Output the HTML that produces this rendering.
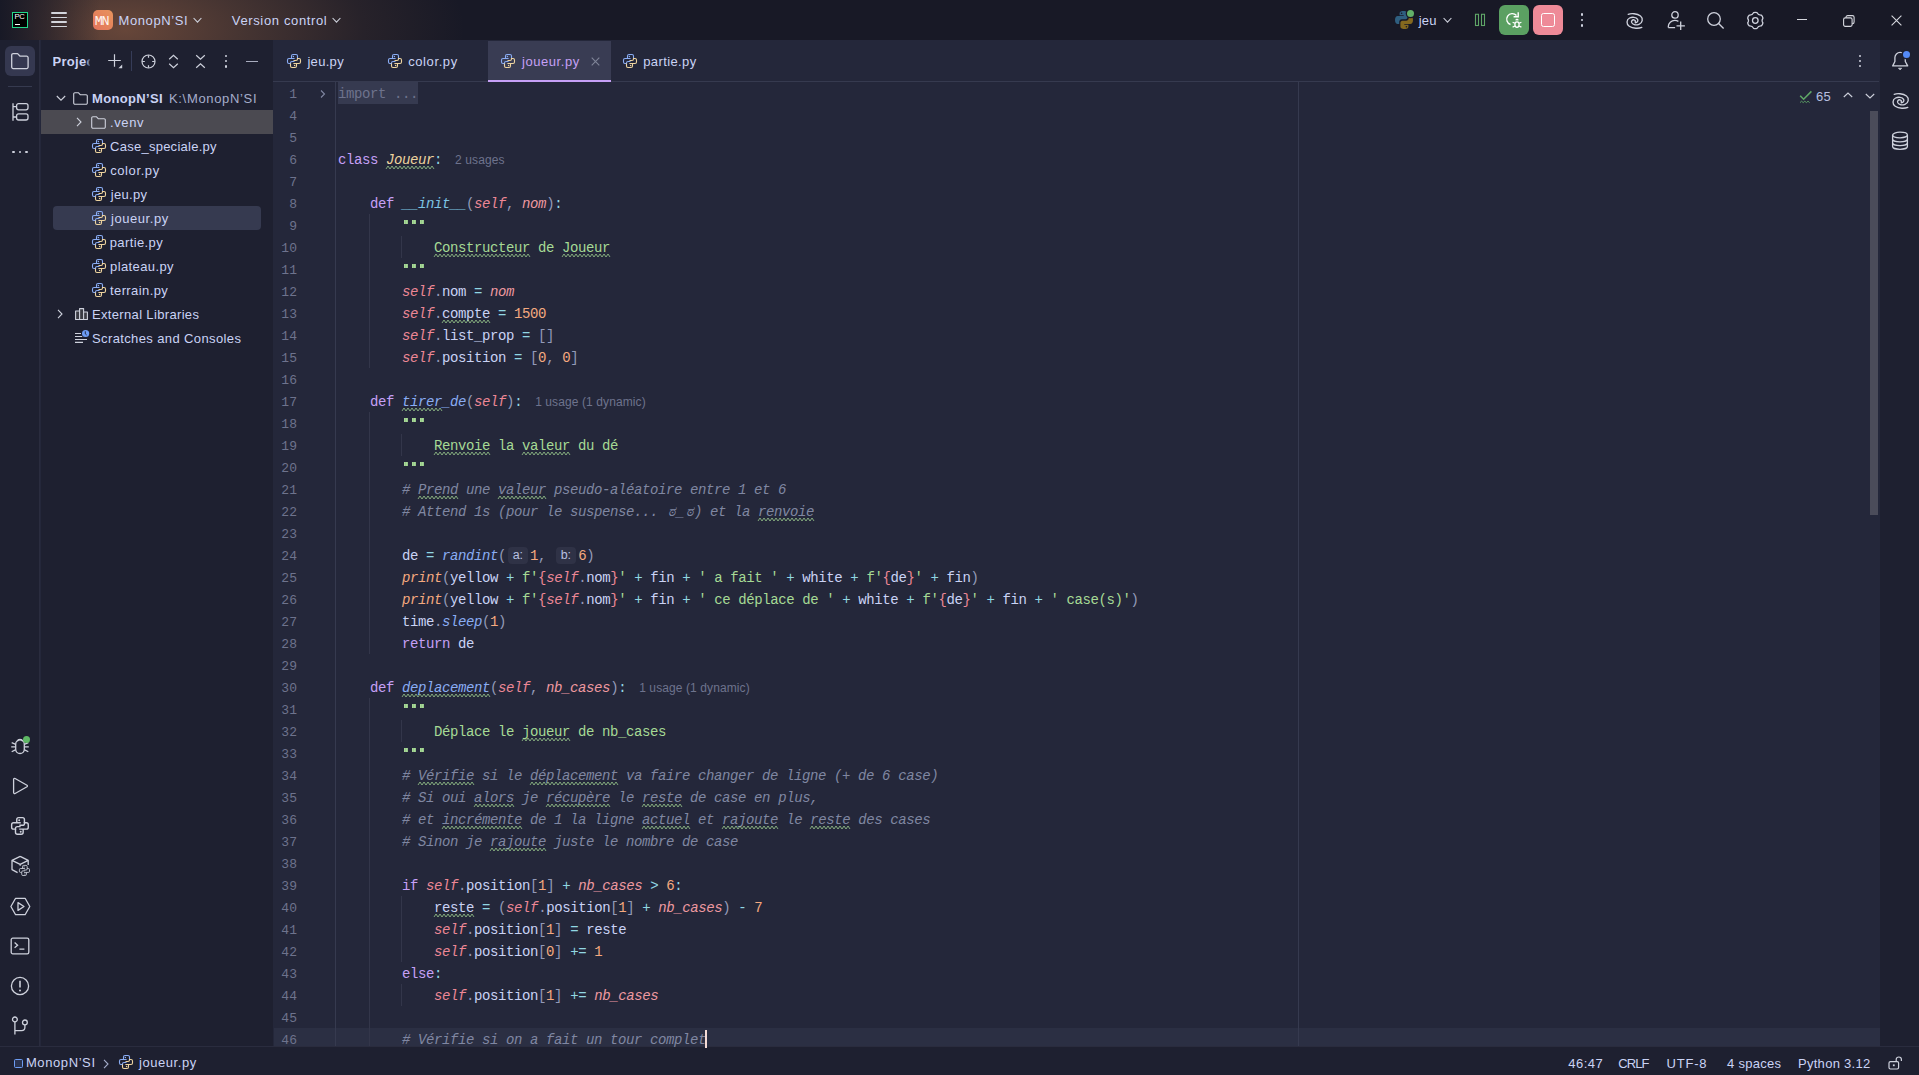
<!DOCTYPE html><html><head><meta charset="utf-8"><style>
*{margin:0;padding:0;box-sizing:border-box}
html,body{width:1919px;height:1075px;overflow:hidden;background:#24273a}
body{position:relative;font-family:"Liberation Sans",sans-serif;font-size:13px;color:#cad3f5}
.abs{position:absolute}
.ic{position:absolute;overflow:visible}
.ui{position:absolute;white-space:pre;font-family:"Liberation Sans",sans-serif;font-size:13px;letter-spacing:0.3px;line-height:16px;color:#cad3f5}
#title{left:0;top:0;width:1919px;height:40px;background:#181926}
#glow{left:0;top:0;width:700px;height:40px;background:linear-gradient(90deg,#181926 0px,rgba(24,25,38,0.6) 40px,rgba(24,25,38,0) 100px),radial-gradient(ellipse 340px 150px at 125px 30px, rgba(155,100,70,0.6) 0%, rgba(150,100,70,0.36) 35%, rgba(150,100,70,0.12) 70%, rgba(150,100,70,0) 100%)}
#lstrip{left:0;top:40px;width:40px;height:1006px;background:#1e2030;border-right:1px solid #2a2c3e}
#proj{left:41px;top:40px;width:232px;height:1006px;background:#1e2030}
#rstrip{left:1880px;top:40px;width:39px;height:1006px;background:#1e2030}
#status{left:0;top:1046px;width:1919px;height:29px;background:#1e2030;border-top:1px solid #2a2c3e}
#editor{left:273px;top:40px;width:1606px;height:1006px;background:#24273a}
#tabline{left:273px;top:81px;width:1606px;height:1px;background:#363a4f}
.code{position:absolute;left:338px;height:22px;white-space:pre;font-family:"Liberation Mono",monospace;font-size:14px;letter-spacing:-0.4px;line-height:22px;color:#cad3f5}
.code span{position:relative;top:1px}
.ln{position:absolute;left:273px;width:24.2px;text-align:right;height:22px;white-space:pre;font-family:"Liberation Mono",monospace;font-size:13px;letter-spacing:0.2px;line-height:22px;color:#6e738d}
.ln span{position:relative;top:2px}
.k{color:#c6a0f6}
.c{color:#eed49f;font-style:italic}
.f{color:#8aadf4;font-style:italic}
.m{color:#7dc4e4;font-style:italic}
.s{color:#ed8796;font-style:italic}
.p{color:#ee99a0;font-style:italic}
.o{color:#91d7e3}
.b{color:#939ab7}
.n{color:#f5a97f}
.g{color:#a6da95}
.cm{color:#8087a2;font-style:italic}
.bi{color:#f5a97f;font-style:italic}
.t{color:#cad3f5}
.fb{color:#ed8796}
.typo{}
.hint{font-family:"Liberation Sans",sans-serif;font-size:12px;letter-spacing:0.1px;color:#6e738d}
.ihint{display:inline-block;width:24px;text-align:left;letter-spacing:0}
.ihint i{font-style:normal;display:inline-block;margin-left:2px;width:19.5px;text-align:center;height:17px;line-height:17px;background:#2f3246;border-radius:4px;font-family:"Liberation Sans",sans-serif;font-size:12.5px;letter-spacing:0;color:#b8c0e0;vertical-align:top;margin-top:2px;top:0 !important}
.dq{display:inline-block;width:8px;height:22px;vertical-align:top;top:0 !important;background:linear-gradient(#a6da95,#a6da95) 2px 6px/1.9px 4.2px no-repeat,linear-gradient(#a6da95,#a6da95) 4.4px 6px/1.9px 4.2px no-repeat}
.guide{position:absolute;width:1px;background:#363a4f}
</style></head><body>
<svg width="0" height="0" style="position:absolute"><defs>
<g id="py" fill="none" stroke-width="1.1">
<path stroke="#8aadf4" d="M7.6 4.5H2A1.5 1.5 0 0 0 0.5 6V8A1.5 1.5 0 0 0 2 9.5H3.5V9A1.5 1.5 0 0 1 5 7.5H7.5M4.5 4.5V2A1.5 1.5 0 0 1 6 0.5H9A1.5 1.5 0 0 1 10.5 2V4.6"/>
<path stroke="#eed49f" d="M6.4 9.5H12A1.5 1.5 0 0 0 13.5 8V6A1.5 1.5 0 0 0 12 4.5H10.5V5A1.5 1.5 0 0 1 9 6.5H6.5M9.5 9.5V12A1.5 1.5 0 0 1 8 13.5H5A1.5 1.5 0 0 1 3.5 12V9.4"/>
<circle cx="6.4" cy="2.5" r="0.75" fill="#8aadf4" stroke="none"/>
<circle cx="7.6" cy="11.5" r="0.75" fill="#eed49f" stroke="none"/>
</g>
<g id="pyo" fill="none" stroke="#ced1dc" stroke-width="1.1">
<path d="M7.6 4.5H2A1.5 1.5 0 0 0 0.5 6V8A1.5 1.5 0 0 0 2 9.5H3.5V9A1.5 1.5 0 0 1 5 7.5H7.5M4.5 4.5V2A1.5 1.5 0 0 1 6 0.5H9A1.5 1.5 0 0 1 10.5 2V4.6"/>
<path d="M6.4 9.5H12A1.5 1.5 0 0 0 13.5 8V6A1.5 1.5 0 0 0 12 4.5H10.5V5A1.5 1.5 0 0 1 9 6.5H6.5M9.5 9.5V12A1.5 1.5 0 0 1 8 13.5H5A1.5 1.5 0 0 1 3.5 12V9.4"/>
<circle cx="6.4" cy="2.5" r="0.75" fill="#ced1dc" stroke="none"/><circle cx="7.6" cy="11.5" r="0.75" fill="#ced1dc" stroke="none"/></g>
</defs></svg>
<div id="title" class="abs"><div id="glow" class="abs"></div></div>
<div id="lstrip" class="abs"></div><div id="proj" class="abs"></div><div id="editor" class="abs"></div><div id="rstrip" class="abs"></div><div id="status" class="abs"></div>
<div id="tabline" class="abs"></div>
<div class="abs" style="left:274px;top:1028px;width:1606px;height:18px;background:#2b2f43"></div>
<div class="abs" style="left:338px;top:82px;width:80px;height:22px;background:#363a50"></div>
<div class="guide" style="left:335px;top:82px;height:964px"></div>
<div class="guide" style="left:369px;top:214px;height:154px;background:#33364a"></div>
<div class="guide" style="left:401px;top:236px;height:22px;background:#33364a"></div>
<div class="guide" style="left:369px;top:412px;height:242px;background:#33364a"></div>
<div class="guide" style="left:401px;top:434px;height:22px;background:#33364a"></div>
<div class="guide" style="left:369px;top:698px;height:348px;background:#33364a"></div>
<div class="guide" style="left:401px;top:720px;height:22px;background:#33364a"></div>
<div class="guide" style="left:401px;top:896px;height:66px;background:#33364a"></div>
<div class="guide" style="left:401px;top:984px;height:22px;background:#33364a"></div>
<div class="ln" style="top:82px"><span>1</span></div>
<div class="code" style="top:82px"><span class="b" style="color:#6e738d">import ...</span></div>
<div class="ln" style="top:104px"><span>4</span></div>
<div class="ln" style="top:126px"><span>5</span></div>
<div class="ln" style="top:148px"><span>6</span></div>
<div class="code" style="top:148px"><span class="k">class</span><span class="t"> </span><span class="c typo">Joueur</span><span class="o">:</span><span class="hint" style="margin-left:13px">2 usages</span></div>
<div class="ln" style="top:170px"><span>7</span></div>
<div class="ln" style="top:192px"><span>8</span></div>
<div class="code" style="top:192px"><span class="t">    </span><span class="k">def</span><span class="t"> </span><span class="m">__init__</span><span class="b">(</span><span class="s">self</span><span class="b">, </span><span class="p">nom</span><span class="b">)</span><span class="o">:</span></div>
<div class="ln" style="top:214px"><span>9</span></div>
<div class="code" style="top:214px"><span class="t">        </span><i class="dq"></i><i class="dq"></i><i class="dq"></i></div>
<div class="ln" style="top:236px"><span>10</span></div>
<div class="code" style="top:236px"><span class="t">            </span><span class="g typo">Constructeur</span><span class="g"> de </span><span class="g typo">Joueur</span></div>
<div class="ln" style="top:258px"><span>11</span></div>
<div class="code" style="top:258px"><span class="t">        </span><i class="dq"></i><i class="dq"></i><i class="dq"></i></div>
<div class="ln" style="top:280px"><span>12</span></div>
<div class="code" style="top:280px"><span class="t">        </span><span class="s">self</span><span class="b">.</span><span class="t">nom </span><span class="o">=</span><span class="t"> </span><span class="p">nom</span></div>
<div class="ln" style="top:302px"><span>13</span></div>
<div class="code" style="top:302px"><span class="t">        </span><span class="s">self</span><span class="b">.</span><span class="t typo">compte</span><span class="t"> </span><span class="o">=</span><span class="t"> </span><span class="n">1500</span></div>
<div class="ln" style="top:324px"><span>14</span></div>
<div class="code" style="top:324px"><span class="t">        </span><span class="s">self</span><span class="b">.</span><span class="t">list_prop </span><span class="o">=</span><span class="t"> </span><span class="b">[]</span></div>
<div class="ln" style="top:346px"><span>15</span></div>
<div class="code" style="top:346px"><span class="t">        </span><span class="s">self</span><span class="b">.</span><span class="t">position </span><span class="o">=</span><span class="t"> </span><span class="b">[</span><span class="n">0</span><span class="b">, </span><span class="n">0</span><span class="b">]</span></div>
<div class="ln" style="top:368px"><span>16</span></div>
<div class="ln" style="top:390px"><span>17</span></div>
<div class="code" style="top:390px"><span class="t">    </span><span class="k">def</span><span class="t"> </span><span class="f typo">tirer</span><span class="f">_de</span><span class="b">(</span><span class="s">self</span><span class="b">)</span><span class="o">:</span><span class="hint" style="margin-left:13px">1 usage (1 dynamic)</span></div>
<div class="ln" style="top:412px"><span>18</span></div>
<div class="code" style="top:412px"><span class="t">        </span><i class="dq"></i><i class="dq"></i><i class="dq"></i></div>
<div class="ln" style="top:434px"><span>19</span></div>
<div class="code" style="top:434px"><span class="t">            </span><span class="g typo">Renvoie</span><span class="g"> la </span><span class="g typo">valeur</span><span class="g"> du dé</span></div>
<div class="ln" style="top:456px"><span>20</span></div>
<div class="code" style="top:456px"><span class="t">        </span><i class="dq"></i><i class="dq"></i><i class="dq"></i></div>
<div class="ln" style="top:478px"><span>21</span></div>
<div class="code" style="top:478px"><span class="t">        </span><span class="cm"># </span><span class="cm typo">Prend</span><span class="cm"> une </span><span class="cm typo">valeur</span><span class="cm"> pseudo-aléatoire entre 1 et 6</span></div>
<div class="ln" style="top:500px"><span>22</span></div>
<div class="code" style="top:500px"><span class="t">        </span><span class="cm"># Attend 1s (pour le suspense... <b style="display:inline-block;width:10px;font-weight:normal;text-align:center;top:0">ಠ</b>_<b style="display:inline-block;width:10px;font-weight:normal;text-align:center;top:0">ಠ</b>) et la </span><span class="cm typo">renvoie</span></div>
<div class="ln" style="top:522px"><span>23</span></div>
<div class="ln" style="top:544px"><span>24</span></div>
<div class="code" style="top:544px"><span class="t">        </span><span class="t">de </span><span class="o">=</span><span class="t"> </span><span class="f">randint</span><span class="b">(</span><span class="ihint"><i>a:</i></span><span class="n">1</span><span class="b">,</span><span class="t"> </span><span class="ihint"><i>b:</i></span><span class="n">6</span><span class="b">)</span></div>
<div class="ln" style="top:566px"><span>25</span></div>
<div class="code" style="top:566px"><span class="t">        </span><span class="bi">print</span><span class="b">(</span><span class="t">yellow </span><span class="o">+</span><span class="t"> </span><span class="g">f'</span><span class="fb">{</span><span class="s">self</span><span class="b">.</span><span class="t">nom</span><span class="fb">}</span><span class="g">'</span><span class="t"> </span><span class="o">+</span><span class="t"> fin </span><span class="o">+</span><span class="t"> </span><span class="g">' a fait '</span><span class="t"> </span><span class="o">+</span><span class="t"> white </span><span class="o">+</span><span class="t"> </span><span class="g">f'</span><span class="fb">{</span><span class="t">de</span><span class="fb">}</span><span class="g">'</span><span class="t"> </span><span class="o">+</span><span class="t"> fin</span><span class="b">)</span></div>
<div class="ln" style="top:588px"><span>26</span></div>
<div class="code" style="top:588px"><span class="t">        </span><span class="bi">print</span><span class="b">(</span><span class="t">yellow </span><span class="o">+</span><span class="t"> </span><span class="g">f'</span><span class="fb">{</span><span class="s">self</span><span class="b">.</span><span class="t">nom</span><span class="fb">}</span><span class="g">'</span><span class="t"> </span><span class="o">+</span><span class="t"> fin </span><span class="o">+</span><span class="t"> </span><span class="g">' ce déplace de '</span><span class="t"> </span><span class="o">+</span><span class="t"> white </span><span class="o">+</span><span class="t"> </span><span class="g">f'</span><span class="fb">{</span><span class="t">de</span><span class="fb">}</span><span class="g">'</span><span class="t"> </span><span class="o">+</span><span class="t"> fin </span><span class="o">+</span><span class="t"> </span><span class="g">' case(s)'</span><span class="b">)</span></div>
<div class="ln" style="top:610px"><span>27</span></div>
<div class="code" style="top:610px"><span class="t">        </span><span class="t">time</span><span class="b">.</span><span class="f">sleep</span><span class="b">(</span><span class="n">1</span><span class="b">)</span></div>
<div class="ln" style="top:632px"><span>28</span></div>
<div class="code" style="top:632px"><span class="t">        </span><span class="k">return</span><span class="t"> de</span></div>
<div class="ln" style="top:654px"><span>29</span></div>
<div class="ln" style="top:676px"><span>30</span></div>
<div class="code" style="top:676px"><span class="t">    </span><span class="k">def</span><span class="t"> </span><span class="f typo">deplacement</span><span class="b">(</span><span class="s">self</span><span class="b">, </span><span class="p">nb_cases</span><span class="b">)</span><span class="o">:</span><span class="hint" style="margin-left:13px">1 usage (1 dynamic)</span></div>
<div class="ln" style="top:698px"><span>31</span></div>
<div class="code" style="top:698px"><span class="t">        </span><i class="dq"></i><i class="dq"></i><i class="dq"></i></div>
<div class="ln" style="top:720px"><span>32</span></div>
<div class="code" style="top:720px"><span class="t">            </span><span class="g">Déplace le </span><span class="g typo">joueur</span><span class="g"> de nb_cases</span></div>
<div class="ln" style="top:742px"><span>33</span></div>
<div class="code" style="top:742px"><span class="t">        </span><i class="dq"></i><i class="dq"></i><i class="dq"></i></div>
<div class="ln" style="top:764px"><span>34</span></div>
<div class="code" style="top:764px"><span class="t">        </span><span class="cm"># </span><span class="cm typo">Vérifie</span><span class="cm"> si le </span><span class="cm typo">déplacement</span><span class="cm"> va faire changer de ligne (+ de 6 case)</span></div>
<div class="ln" style="top:786px"><span>35</span></div>
<div class="code" style="top:786px"><span class="t">        </span><span class="cm"># Si oui </span><span class="cm typo">alors</span><span class="cm"> je </span><span class="cm typo">récupère</span><span class="cm"> le </span><span class="cm typo">reste</span><span class="cm"> de case en plus,</span></div>
<div class="ln" style="top:808px"><span>36</span></div>
<div class="code" style="top:808px"><span class="t">        </span><span class="cm"># et </span><span class="cm typo">incrémente</span><span class="cm"> de 1 la ligne </span><span class="cm typo">actuel</span><span class="cm"> et </span><span class="cm typo">rajoute</span><span class="cm"> le </span><span class="cm typo">reste</span><span class="cm"> des cases</span></div>
<div class="ln" style="top:830px"><span>37</span></div>
<div class="code" style="top:830px"><span class="t">        </span><span class="cm"># Sinon je </span><span class="cm typo">rajoute</span><span class="cm"> juste le nombre de case</span></div>
<div class="ln" style="top:852px"><span>38</span></div>
<div class="ln" style="top:874px"><span>39</span></div>
<div class="code" style="top:874px"><span class="t">        </span><span class="k">if</span><span class="t"> </span><span class="s">self</span><span class="b">.</span><span class="t">position</span><span class="b">[</span><span class="n">1</span><span class="b">]</span><span class="t"> </span><span class="o">+</span><span class="t"> </span><span class="p">nb_cases</span><span class="t"> </span><span class="o">&gt;</span><span class="t"> </span><span class="n">6</span><span class="o">:</span></div>
<div class="ln" style="top:896px"><span>40</span></div>
<div class="code" style="top:896px"><span class="t">            </span><span class="t typo">reste</span><span class="t"> </span><span class="o">=</span><span class="t"> </span><span class="b">(</span><span class="s">self</span><span class="b">.</span><span class="t">position</span><span class="b">[</span><span class="n">1</span><span class="b">]</span><span class="t"> </span><span class="o">+</span><span class="t"> </span><span class="p">nb_cases</span><span class="b">)</span><span class="t"> </span><span class="o">-</span><span class="t"> </span><span class="n">7</span></div>
<div class="ln" style="top:918px"><span>41</span></div>
<div class="code" style="top:918px"><span class="t">            </span><span class="s">self</span><span class="b">.</span><span class="t">position</span><span class="b">[</span><span class="n">1</span><span class="b">]</span><span class="t"> </span><span class="o">=</span><span class="t"> reste</span></div>
<div class="ln" style="top:940px"><span>42</span></div>
<div class="code" style="top:940px"><span class="t">            </span><span class="s">self</span><span class="b">.</span><span class="t">position</span><span class="b">[</span><span class="n">0</span><span class="b">]</span><span class="t"> </span><span class="o">+=</span><span class="t"> </span><span class="n">1</span></div>
<div class="ln" style="top:962px"><span>43</span></div>
<div class="code" style="top:962px"><span class="t">        </span><span class="k">else</span><span class="o">:</span></div>
<div class="ln" style="top:984px"><span>44</span></div>
<div class="code" style="top:984px"><span class="t">            </span><span class="s">self</span><span class="b">.</span><span class="t">position</span><span class="b">[</span><span class="n">1</span><span class="b">]</span><span class="t"> </span><span class="o">+=</span><span class="t"> </span><span class="p">nb_cases</span></div>
<div class="ln" style="top:1006px"><span>45</span></div>
<div class="ln" style="top:1028px"><span>46</span></div>
<div class="code" style="top:1028px"><span class="t">        </span><span class="cm"># Vérifie si on a fait un tour complet</span><span style="display:inline-block;width:2px;height:18px;background:#f4dbd6;vertical-align:top;margin-top:2px;margin-left:-1px;top:0"></span></div>
<svg class="ic" style="left:0;top:0" width="1919" height="1075"><path d="M386 169 L388 166 L390 169 L392 166 L394 169 L396 166 L398 169 L400 166 L402 169 L404 166 L406 169 L408 166 L410 169 L412 166 L414 169 L416 166 L418 169 L420 166 L422 169 L424 166 L426 169 L428 166 L430 169 L432 166 L434 169 M434 257 L436 254 L438 257 L440 254 L442 257 L444 254 L446 257 L448 254 L450 257 L452 254 L454 257 L456 254 L458 257 L460 254 L462 257 L464 254 L466 257 L468 254 L470 257 L472 254 L474 257 L476 254 L478 257 L480 254 L482 257 L484 254 L486 257 L488 254 L490 257 L492 254 L494 257 L496 254 L498 257 L500 254 L502 257 L504 254 L506 257 L508 254 L510 257 L512 254 L514 257 L516 254 L518 257 L520 254 L522 257 L524 254 L526 257 L528 254 L530 257 M562 257 L564 254 L566 257 L568 254 L570 257 L572 254 L574 257 L576 254 L578 257 L580 254 L582 257 L584 254 L586 257 L588 254 L590 257 L592 254 L594 257 L596 254 L598 257 L600 254 L602 257 L604 254 L606 257 L608 254 L610 257 M442 323 L444 320 L446 323 L448 320 L450 323 L452 320 L454 323 L456 320 L458 323 L460 320 L462 323 L464 320 L466 323 L468 320 L470 323 L472 320 L474 323 L476 320 L478 323 L480 320 L482 323 L484 320 L486 323 L488 320 L490 323 M402 411 L404 408 L406 411 L408 408 L410 411 L412 408 L414 411 L416 408 L418 411 L420 408 L422 411 L424 408 L426 411 L428 408 L430 411 L432 408 L434 411 L436 408 L438 411 L440 408 L442 411 M434 455 L436 452 L438 455 L440 452 L442 455 L444 452 L446 455 L448 452 L450 455 L452 452 L454 455 L456 452 L458 455 L460 452 L462 455 L464 452 L466 455 L468 452 L470 455 L472 452 L474 455 L476 452 L478 455 L480 452 L482 455 L484 452 L486 455 L488 452 L490 455 M522 455 L524 452 L526 455 L528 452 L530 455 L532 452 L534 455 L536 452 L538 455 L540 452 L542 455 L544 452 L546 455 L548 452 L550 455 L552 452 L554 455 L556 452 L558 455 L560 452 L562 455 L564 452 L566 455 L568 452 L570 455 M418 499 L420 496 L422 499 L424 496 L426 499 L428 496 L430 499 L432 496 L434 499 L436 496 L438 499 L440 496 L442 499 L444 496 L446 499 L448 496 L450 499 L452 496 L454 499 L456 496 L458 499 M498 499 L500 496 L502 499 L504 496 L506 499 L508 496 L510 499 L512 496 L514 499 L516 496 L518 499 L520 496 L522 499 L524 496 L526 499 L528 496 L530 499 L532 496 L534 499 L536 496 L538 499 L540 496 L542 499 L544 496 L546 499 M758 521 L760 518 L762 521 L764 518 L766 521 L768 518 L770 521 L772 518 L774 521 L776 518 L778 521 L780 518 L782 521 L784 518 L786 521 L788 518 L790 521 L792 518 L794 521 L796 518 L798 521 L800 518 L802 521 L804 518 L806 521 L808 518 L810 521 L812 518 L814 521 M402 697 L404 694 L406 697 L408 694 L410 697 L412 694 L414 697 L416 694 L418 697 L420 694 L422 697 L424 694 L426 697 L428 694 L430 697 L432 694 L434 697 L436 694 L438 697 L440 694 L442 697 L444 694 L446 697 L448 694 L450 697 L452 694 L454 697 L456 694 L458 697 L460 694 L462 697 L464 694 L466 697 L468 694 L470 697 L472 694 L474 697 L476 694 L478 697 L480 694 L482 697 L484 694 L486 697 L488 694 L490 697 M522 741 L524 738 L526 741 L528 738 L530 741 L532 738 L534 741 L536 738 L538 741 L540 738 L542 741 L544 738 L546 741 L548 738 L550 741 L552 738 L554 741 L556 738 L558 741 L560 738 L562 741 L564 738 L566 741 L568 738 L570 741 M418 785 L420 782 L422 785 L424 782 L426 785 L428 782 L430 785 L432 782 L434 785 L436 782 L438 785 L440 782 L442 785 L444 782 L446 785 L448 782 L450 785 L452 782 L454 785 L456 782 L458 785 L460 782 L462 785 L464 782 L466 785 L468 782 L470 785 L472 782 L474 785 M530 785 L532 782 L534 785 L536 782 L538 785 L540 782 L542 785 L544 782 L546 785 L548 782 L550 785 L552 782 L554 785 L556 782 L558 785 L560 782 L562 785 L564 782 L566 785 L568 782 L570 785 L572 782 L574 785 L576 782 L578 785 L580 782 L582 785 L584 782 L586 785 L588 782 L590 785 L592 782 L594 785 L596 782 L598 785 L600 782 L602 785 L604 782 L606 785 L608 782 L610 785 L612 782 L614 785 L616 782 L618 785 M474 807 L476 804 L478 807 L480 804 L482 807 L484 804 L486 807 L488 804 L490 807 L492 804 L494 807 L496 804 L498 807 L500 804 L502 807 L504 804 L506 807 L508 804 L510 807 L512 804 L514 807 M546 807 L548 804 L550 807 L552 804 L554 807 L556 804 L558 807 L560 804 L562 807 L564 804 L566 807 L568 804 L570 807 L572 804 L574 807 L576 804 L578 807 L580 804 L582 807 L584 804 L586 807 L588 804 L590 807 L592 804 L594 807 L596 804 L598 807 L600 804 L602 807 L604 804 L606 807 L608 804 L610 807 M642 807 L644 804 L646 807 L648 804 L650 807 L652 804 L654 807 L656 804 L658 807 L660 804 L662 807 L664 804 L666 807 L668 804 L670 807 L672 804 L674 807 L676 804 L678 807 L680 804 L682 807 M442 829 L444 826 L446 829 L448 826 L450 829 L452 826 L454 829 L456 826 L458 829 L460 826 L462 829 L464 826 L466 829 L468 826 L470 829 L472 826 L474 829 L476 826 L478 829 L480 826 L482 829 L484 826 L486 829 L488 826 L490 829 L492 826 L494 829 L496 826 L498 829 L500 826 L502 829 L504 826 L506 829 L508 826 L510 829 L512 826 L514 829 L516 826 L518 829 L520 826 L522 829 M642 829 L644 826 L646 829 L648 826 L650 829 L652 826 L654 829 L656 826 L658 829 L660 826 L662 829 L664 826 L666 829 L668 826 L670 829 L672 826 L674 829 L676 826 L678 829 L680 826 L682 829 L684 826 L686 829 L688 826 L690 829 M722 829 L724 826 L726 829 L728 826 L730 829 L732 826 L734 829 L736 826 L738 829 L740 826 L742 829 L744 826 L746 829 L748 826 L750 829 L752 826 L754 829 L756 826 L758 829 L760 826 L762 829 L764 826 L766 829 L768 826 L770 829 L772 826 L774 829 L776 826 L778 829 M810 829 L812 826 L814 829 L816 826 L818 829 L820 826 L822 829 L824 826 L826 829 L828 826 L830 829 L832 826 L834 829 L836 826 L838 829 L840 826 L842 829 L844 826 L846 829 L848 826 L850 829 M490 851 L492 848 L494 851 L496 848 L498 851 L500 848 L502 851 L504 848 L506 851 L508 848 L510 851 L512 848 L514 851 L516 848 L518 851 L520 848 L522 851 L524 848 L526 851 L528 848 L530 851 L532 848 L534 851 L536 848 L538 851 L540 848 L542 851 L544 848 L546 851 M434 917 L436 914 L438 917 L440 914 L442 917 L444 914 L446 917 L448 914 L450 917 L452 914 L454 917 L456 914 L458 917 L460 914 L462 917 L464 914 L466 917 L468 914 L470 917 L472 914 L474 917" fill="none" stroke="#a6da95" stroke-opacity="0.8" stroke-width="0.9"/></svg>
<svg class="ic" style="left:319px;top:89px" width="8" height="10" viewBox="0 0 8 10"><path d="M2 1.5L5.5 5L2 8.5" fill="none" stroke="#8087a2" stroke-width="1.1"/></svg>
<div class="abs" style="left:12px;top:12px;width:16px;height:16px;background:#000;border:1.3px solid #21d789"></div>
<div class="abs" style="left:14.6px;top:13.4px;font-family:Liberation Sans;font-weight:normal;font-size:7.6px;letter-spacing:-0.5px;color:#fff;line-height:8px">PC</div>
<div class="abs" style="left:15px;top:23.6px;width:5px;height:1.3px;background:#fff"></div>
<div class="abs" style="left:51px;top:12.4px;width:16px;height:1.5px;background:#d3d5dc;border-radius:1px"></div>
<div class="abs" style="left:51px;top:16.9px;width:16px;height:1.5px;background:#d3d5dc;border-radius:1px"></div>
<div class="abs" style="left:51px;top:21.4px;width:16px;height:1.5px;background:#d3d5dc;border-radius:1px"></div>
<div class="abs" style="left:51px;top:25.9px;width:16px;height:1.5px;background:#d3d5dc;border-radius:1px"></div>
<div class="abs" style="left:93px;top:10px;width:20px;height:20px;border-radius:5px;background:linear-gradient(45deg,#e2735c,#e8945c)"></div>
<div class="abs" style="left:94.8px;top:14.3px;width:18px;font-family:Liberation Mono;font-size:13.5px;letter-spacing:-1.3px;color:#fff3ee;line-height:16px">MN</div>
<div class="ui" style="left:118.5px;top:12.7px;font-size:13px;color:#cad3f5;font-weight:normal;letter-spacing:0.6px;">MonopN’SI</div>
<svg class="ic" style="left:192.5px;top:17.2px;" width="9" height="7" viewBox="0 0 9 7"><path d="M0.6 1L4.5 5.2L8.4 1" fill="none" stroke="#ced1dc" stroke-width="1.1"/></svg>
<div class="ui" style="left:231.8px;top:12.7px;font-size:13px;color:#cad3f5;font-weight:normal;letter-spacing:0.64px;">Version control</div>
<svg class="ic" style="left:331.5px;top:17.2px;" width="9" height="7" viewBox="0 0 9 7"><path d="M0.6 1L4.5 5.2L8.4 1" fill="none" stroke="#ced1dc" stroke-width="1.1"/></svg>
<svg class="ic" style="left:1395.3px;top:11px;" width="18" height="18" viewBox="0 0 18 18"><path fill="#2f5f80" d="M8.4 0C5 0 4.6 1.5 4.6 2.5V4.3H8.7V5H2.6C1.2 5 0 6.4 0 9C0 11.8 1.2 13 2.6 13H4.2V10.9C4.2 9.4 5.4 8.2 6.9 8.2H10.6C11.8 8.2 12.6 7.2 12.6 6V2.5C12.6 1.3 11.7 0 8.4 0Z"/>
<path fill="#85691f" d="M9.6 18C13 18 13.4 16.5 13.4 15.5V13.7H9.3V13H15.4C16.8 13 18 11.6 18 9C18 6.2 16.8 5 15.4 5H13.8V7.1C13.8 8.6 12.6 9.8 11.1 9.8H7.4C6.2 9.8 5.4 10.8 5.4 12V15.5C5.4 16.7 6.3 18 9.6 18Z"/>
<circle cx="6.6" cy="2.3" r="0.8" fill="#181926"/><circle cx="11.4" cy="15.7" r="0.8" fill="#181926"/></svg>
<div class="abs" style="left:1406.9px;top:9.8px;width:7.2px;height:7.2px;border-radius:50%;background:#62b068;box-shadow:0 0 0 1.3px #181926"></div>
<div class="ui" style="left:1418.7px;top:12.7px;font-size:13px;color:#cad3f5;font-weight:normal;letter-spacing:0.2px;">jeu</div>
<svg class="ic" style="left:1442.5px;top:17.2px;" width="9" height="7" viewBox="0 0 9 7"><path d="M0.6 1L4.5 5.2L8.4 1" fill="none" stroke="#ced1dc" stroke-width="1.1"/></svg>
<svg class="ic" style="left:1474px;top:13px;" width="12" height="14" viewBox="0 0 12 14"><rect x="1.5" y="1.3" width="3" height="11.2" fill="none" stroke="#5fa667" stroke-width="1.1"/><rect x="7.5" y="1.3" width="3" height="11.2" fill="none" stroke="#5fa667" stroke-width="1.1"/></svg>
<div class="abs" style="left:1499px;top:5px;width:30px;height:30px;border-radius:6px;background:#5ba062"></div>
<svg class="ic" style="left:1496px;top:4px;" width="36" height="32" viewBox="0 0 36 32"><path d="M14.5 20.5A5.6 5.6 0 1 1 20.5 11.5" fill="none" stroke="#fff" stroke-width="1.4"/>
<path d="M22.2 8.2V12.8H17.6" fill="none" stroke="#fff" stroke-width="1.4"/>
<ellipse cx="21" cy="20.6" rx="2.1" ry="2.7" fill="none" stroke="#fff" stroke-width="1.3"/>
<path d="M16.6 18.2L19 19.3M16.6 23.1L19 22M25.4 18.2L23 19.3M25.4 23.1L23 22M19.6 16.2L21 15.2L22.4 16.2" fill="none" stroke="#fff" stroke-width="1.2"/></svg>
<div class="abs" style="left:1533px;top:5px;width:30px;height:30px;border-radius:6px;background:#ee8a98"></div>
<div class="abs" style="left:1541px;top:13px;width:14px;height:14px;border-radius:2.5px;border:1.4px solid #fff"></div>
<div class="abs" style="left:1580.7px;top:13.299999999999999px;width:2.6px;height:2.6px;border-radius:50%;background:#cfd3e0"></div>
<div class="abs" style="left:1580.7px;top:18.7px;width:2.6px;height:2.6px;border-radius:50%;background:#cfd3e0"></div>
<div class="abs" style="left:1580.7px;top:24.099999999999998px;width:2.6px;height:2.6px;border-radius:50%;background:#cfd3e0"></div>
<svg class="ic" style="left:1622.3px;top:9px;" width="26" height="24" viewBox="0 0 26 24"><path d="M6.2 5.3C9 4.3 15 4.3 18.5 7C21.5 9.5 20.5 14 17 15.3C14.5 16.2 11 16 9.8 13.8C8.9 12 10.5 10.6 12 10.8C13.2 11 13.7 12.2 13.2 12.8M19.8 18.4C17 19.6 11 19.8 7.2 17.3C4.2 15.3 4.3 10.6 7.6 9C10 7.8 14.3 7.9 15.6 10.4C16.4 12 15.4 13.8 13.2 13.8" fill="none" stroke="#ced1dc" stroke-width="1.35" stroke-linecap="round"/></svg>
<svg class="ic" style="left:1667px;top:11px;" width="19" height="19" viewBox="0 0 19 19"><circle cx="8" cy="3.9" r="3.2" fill="none" stroke="#ced1dc" stroke-width="1.3"/>
<path d="M1.3 16.6V15.6C1.3 12.1 4.3 9.4 7.9 9.4C9.2 9.4 10.4 9.8 11.4 10.4M1.3 16.6H8.1" fill="none" stroke="#ced1dc" stroke-width="1.3"/>
<path d="M13.7 10.6V19M9.5 14.8H17.9" stroke="#ced1dc" stroke-width="1.3"/></svg>
<svg class="ic" style="left:1706px;top:11px;" width="19" height="19" viewBox="0 0 19 19"><circle cx="8" cy="8" r="6.3" fill="none" stroke="#ced1dc" stroke-width="1.3"/><path d="M12.6 12.6L17.6 17.6" stroke="#ced1dc" stroke-width="1.4"/></svg>
<svg class="ic" style="left:1745.5px;top:10.5px;" width="19" height="19" viewBox="0 0 19 19"><path d="M7.55 1.69Q9.30 1.00 11.05 1.69Q12.30 4.30 15.19 4.08Q16.66 5.25 16.93 7.11Q15.30 9.50 16.93 11.89Q16.66 13.75 15.19 14.92Q12.30 14.70 11.05 17.31Q9.30 18.00 7.55 17.31Q6.30 14.70 3.41 14.92Q1.94 13.75 1.67 11.89Q3.30 9.50 1.67 7.11Q1.94 5.25 3.41 4.08Q6.30 4.30 7.55 1.69Z" fill="none" stroke="#ced1dc" stroke-width="1.3" stroke-linejoin="round"/><circle cx="9.3" cy="9.5" r="2.8" fill="none" stroke="#ced1dc" stroke-width="1.3"/></svg>
<div class="abs" style="left:1796.5px;top:19.2px;width:10.5px;height:1.1px;background:#d5d7de"></div>
<svg class="ic" style="left:1843px;top:14.5px;" width="12" height="12" viewBox="0 0 12 12"><rect x="0.6" y="2.9" width="8.5" height="8.5" rx="1.6" fill="none" stroke="#d5d7de" stroke-width="1.1"/><path d="M3 2.7V2.3A1.7 1.7 0 0 1 4.7 0.6H9.4A1.7 1.7 0 0 1 11.1 2.3V7A1.7 1.7 0 0 1 9.4 8.7H9.1" fill="none" stroke="#d5d7de" stroke-width="1.1"/></svg>
<svg class="ic" style="left:1890.5px;top:14.5px;" width="11" height="11" viewBox="0 0 11 11"><path d="M0.6 0.6L10.4 10.4M10.4 0.6L0.6 10.4" stroke="#d5d7de" stroke-width="1.1"/></svg>
<div class="abs" style="left:5px;top:46px;width:30px;height:30px;border-radius:6px;background:#353850"></div>
<svg class="ic" style="left:10px;top:52px;" width="20" height="18" viewBox="0 0 20 18"><path d="M1.7 3.1A1.5 1.5 0 0 1 3.2 1.6H7.6L10.1 4.2H16.6A1.5 1.5 0 0 1 18.1 5.7V15.1A1.5 1.5 0 0 1 16.6 16.6H3.2A1.5 1.5 0 0 1 1.7 15.1Z" fill="none" stroke="#ced1dc" stroke-width="1.3" stroke-linejoin="round"/></svg>
<div class="abs" style="left:8px;top:85.5px;width:24px;height:1px;background:#363a4f"></div>
<svg class="ic" style="left:11px;top:102px;" width="19" height="20" viewBox="0 0 19 20"><path d="M2 1.2V18.8M2 4.6H5.6M2 15H5.6" fill="none" stroke="#ced1dc" stroke-width="1.3"/><rect x="5.6" y="1.6" width="11.4" height="6.2" rx="2" fill="none" stroke="#ced1dc" stroke-width="1.3"/><rect x="5.6" y="11.8" width="11.4" height="6.2" rx="2" fill="none" stroke="#ced1dc" stroke-width="1.3"/></svg>
<div class="abs" style="left:12.0px;top:150.6px;width:2.8px;height:2.8px;border-radius:50%;background:#ced1dc"></div>
<div class="abs" style="left:18.6px;top:150.6px;width:2.8px;height:2.8px;border-radius:50%;background:#ced1dc"></div>
<div class="abs" style="left:25.200000000000003px;top:150.6px;width:2.8px;height:2.8px;border-radius:50%;background:#ced1dc"></div>
<svg class="ic" style="left:10px;top:736px;" width="20" height="20" viewBox="0 0 20 20"><path d="M5.7 8.2A4.3 4.3 0 0 1 14.3 8.2V13.2A4.3 4.3 0 0 1 5.7 13.2Z" fill="none" stroke="#ced1dc" stroke-width="1.3"/>
<path d="M7.4 5.4A2.7 2.7 0 0 1 12.6 5.4M1.2 10.9H5.7M14.3 10.9H18.8M1.7 6.7L5.7 8.3M18.3 6.7L14.3 8.3M1.7 15.8L5.8 13.6M18.3 15.8L14.2 13.6" fill="none" stroke="#ced1dc" stroke-width="1.3"/></svg>
<div class="abs" style="left:23px;top:735.5px;width:7px;height:7px;border-radius:50%;background:#5fb865"></div>
<svg class="ic" style="left:11px;top:777px;" width="18" height="18" viewBox="0 0 18 18"><path d="M2.6 2.4A1 1 0 0 1 4.1 1.5L16 8.2A1 1 0 0 1 16 9.8L4.1 16.5A1 1 0 0 1 2.6 15.6Z" fill="none" stroke="#ced1dc" stroke-width="1.3" stroke-linejoin="round"/></svg>
<svg class="ic" style="left:10px;top:816px;" width="20" height="20" viewBox="0 0 20 20"><g transform="translate(1,1) scale(1.28)"><use href="#pyo"/></g></svg>
<svg class="ic" style="left:10px;top:855px;" width="20" height="22" viewBox="0 0 20 22"><path d="M10.2 1.3L18.2 5.3V10M10.2 1.3L2 5.3V14.6L7.6 17.6M2 5.3L10.2 9.3L18.2 5.3M10.2 9.3V10.8" fill="none" stroke="#ced1dc" stroke-width="1.3" stroke-linejoin="round"/>
<g transform="translate(9,10) scale(0.78)"><use href="#pyo"/></g></svg>
<svg class="ic" style="left:9.5px;top:896.5px;" width="21" height="19" viewBox="0 0 21 19"><path d="M5.6 1.3H15.1L19.8 9.5L15.1 17.7H5.6L0.9 9.5Z" fill="none" stroke="#ced1dc" stroke-width="1.3" stroke-linejoin="round"/><path d="M8 5.6V13.4L14 9.5Z" fill="none" stroke="#ced1dc" stroke-width="1.3" stroke-linejoin="round"/></svg>
<svg class="ic" style="left:10px;top:937px;" width="20" height="18" viewBox="0 0 20 18"><rect x="1.2" y="1.2" width="17.6" height="15.6" rx="1.6" fill="none" stroke="#ced1dc" stroke-width="1.3"/><path d="M4.6 5.6L7.6 8.2L4.6 10.8M9.4 12.2H14.4" fill="none" stroke="#ced1dc" stroke-width="1.3"/></svg>
<svg class="ic" style="left:10px;top:976px;" width="20" height="20" viewBox="0 0 20 20"><circle cx="10" cy="10" r="8.6" fill="none" stroke="#ced1dc" stroke-width="1.3"/><path d="M10 4.8V11.4" stroke="#ced1dc" stroke-width="1.6"/><circle cx="10" cy="14.4" r="1" fill="#ced1dc"/></svg>
<svg class="ic" style="left:11px;top:1016px;" width="18" height="20" viewBox="0 0 18 20"><circle cx="3.9" cy="3.4" r="2.4" fill="none" stroke="#ced1dc" stroke-width="1.3"/><circle cx="13.9" cy="6.4" r="2.4" fill="none" stroke="#ced1dc" stroke-width="1.3"/><path d="M3.9 5.8V18.6M3.9 14.6H10.6A3.3 3.3 0 0 0 13.9 11.3V8.8" fill="none" stroke="#ced1dc" stroke-width="1.3"/></svg>
<div class="ui" style="left:52.5px;top:53.7px;font-weight:bold;letter-spacing:0.3px;width:37.5px;overflow:hidden">Project</div>
<div class="abs" style="left:86px;top:50px;width:5px;height:20px;background:linear-gradient(90deg,rgba(30,32,48,0),#1e2030)"></div>
<svg class="ic" style="left:107px;top:53px;" width="16" height="16" viewBox="0 0 16 16"><path d="M7.5 1.2V13.8M1.2 7.5H13.8" stroke="#ced1dc" stroke-width="1.2"/><path d="M15.2 11.4V15.2H11.4Z" fill="#ced1dc"/></svg>
<div class="abs" style="left:131px;top:51px;width:1px;height:19.5px;background:#363c58"></div>
<svg class="ic" style="left:140.5px;top:53.5px;" width="15" height="15" viewBox="0 0 15 15"><circle cx="7.5" cy="7.5" r="6.5" fill="none" stroke="#ced1dc" stroke-width="1.2"/><path d="M7.5 1.2V3.8M7.5 11.2V13.8M1.2 7.5H3.8M11.2 7.5H13.8" stroke="#ced1dc" stroke-width="1.2"/></svg>
<svg class="ic" style="left:168px;top:53.5px;" width="11" height="15" viewBox="0 0 11 15"><path d="M1.2 5.2L5.5 1.2L9.8 5.2M1.2 9.8L5.5 13.8L9.8 9.8" fill="none" stroke="#ced1dc" stroke-width="1.2"/></svg>
<svg class="ic" style="left:194.5px;top:53.5px;" width="11" height="15" viewBox="0 0 11 15"><path d="M1.2 1.2L5.5 5.2L9.8 1.2M1.2 13.8L5.5 9.8L9.8 13.8" fill="none" stroke="#ced1dc" stroke-width="1.2"/></svg>
<div class="abs" style="left:224.7px;top:54.7px;width:2.6px;height:2.6px;border-radius:50%;background:#ced1dc"></div>
<div class="abs" style="left:224.7px;top:59.900000000000006px;width:2.6px;height:2.6px;border-radius:50%;background:#ced1dc"></div>
<div class="abs" style="left:224.7px;top:65.10000000000001px;width:2.6px;height:2.6px;border-radius:50%;background:#ced1dc"></div>
<div class="abs" style="left:245.5px;top:60.5px;width:12.5px;height:1.1px;background:#a9adbf"></div>
<div class="abs" style="left:41px;top:110px;width:232px;height:24px;background:#4b4a51"></div>
<div class="abs" style="left:53px;top:206px;width:208px;height:24px;border-radius:4px;background:#363a50"></div>
<svg class="ic" style="left:55.5px;top:94.5px;" width="10" height="7" viewBox="0 0 10 7"><path d="M0.8 1L5 5.2L9.2 1" fill="none" stroke="#ced1dc" stroke-width="1.1"/></svg>
<svg class="ic" style="left:72.5px;top:91.5px;" width="15" height="13" viewBox="0 0 15 13"><path d="M0.7 1.9A1.2 1.2 0 0 1 1.9 0.7H5.3L7.2 2.7H13.1A1.2 1.2 0 0 1 14.3 3.9V11.1A1.2 1.2 0 0 1 13.1 12.3H1.9A1.2 1.2 0 0 1 0.7 11.1Z" fill="none" stroke="#ced1dc" stroke-width="1.1" stroke-linejoin="round"/></svg>
<div class="ui" style="left:92.0px;top:90.7px;font-size:13px;color:#cad3f5;font-weight:bold;letter-spacing:0.34px;">MonopN’SI</div>
<div class="ui" style="left:169.0px;top:90.7px;font-size:13px;color:#a5adcb;font-weight:normal;letter-spacing:0.67px;">K:\MonopN’SI</div>
<svg class="ic" style="left:75.5px;top:117.2px;" width="6" height="10" viewBox="0 0 6 10"><path d="M1 0.8L5 5.0L1 9.2" fill="none" stroke="#ced1dc" stroke-width="1.1"/></svg>
<svg class="ic" style="left:90.5px;top:115.5px;" width="15" height="13" viewBox="0 0 15 13"><path d="M0.7 1.9A1.2 1.2 0 0 1 1.9 0.7H5.3L7.2 2.7H13.1A1.2 1.2 0 0 1 14.3 3.9V11.1A1.2 1.2 0 0 1 13.1 12.3H1.9A1.2 1.2 0 0 1 0.7 11.1Z" fill="none" stroke="#ced1dc" stroke-width="1.1" stroke-linejoin="round"/></svg>
<div class="ui" style="left:110.0px;top:114.7px;font-size:13px;color:#cad3f5;font-weight:normal;letter-spacing:0.6px;">.venv</div>
<svg class="ic" style="left:92px;top:139px" width="14" height="14" viewBox="0 0 14 14"><use href="#py"/></svg>
<div class="ui" style="left:110.0px;top:138.7px;font-size:13px;color:#cad3f5;font-weight:normal;letter-spacing:0.26px;">Case_speciale.py</div>
<svg class="ic" style="left:92px;top:163px" width="14" height="14" viewBox="0 0 14 14"><use href="#py"/></svg>
<div class="ui" style="left:110.2px;top:162.7px;font-size:13px;color:#cad3f5;font-weight:normal;letter-spacing:0.6px;">color.py</div>
<svg class="ic" style="left:92px;top:187px" width="14" height="14" viewBox="0 0 14 14"><use href="#py"/></svg>
<div class="ui" style="left:110.7px;top:186.7px;font-size:13px;color:#cad3f5;font-weight:normal;letter-spacing:0.31px;">jeu.py</div>
<svg class="ic" style="left:92px;top:211px" width="14" height="14" viewBox="0 0 14 14"><use href="#py"/></svg>
<div class="ui" style="left:111.0px;top:210.7px;font-size:13px;color:#cad3f5;font-weight:normal;letter-spacing:0.56px;">joueur.py</div>
<svg class="ic" style="left:92px;top:235px" width="14" height="14" viewBox="0 0 14 14"><use href="#py"/></svg>
<div class="ui" style="left:109.7px;top:234.7px;font-size:13px;color:#cad3f5;font-weight:normal;letter-spacing:0.4px;">partie.py</div>
<svg class="ic" style="left:92px;top:259px" width="14" height="14" viewBox="0 0 14 14"><use href="#py"/></svg>
<div class="ui" style="left:110.0px;top:258.7px;font-size:13px;color:#cad3f5;font-weight:normal;letter-spacing:0.4px;">plateau.py</div>
<svg class="ic" style="left:92px;top:283px" width="14" height="14" viewBox="0 0 14 14"><use href="#py"/></svg>
<div class="ui" style="left:110.0px;top:282.7px;font-size:13px;color:#cad3f5;font-weight:normal;letter-spacing:0.4px;">terrain.py</div>
<svg class="ic" style="left:57px;top:309.2px;" width="6" height="10" viewBox="0 0 6 10"><path d="M1 0.8L5 5.0L1 9.2" fill="none" stroke="#ced1dc" stroke-width="1.1"/></svg>
<svg class="ic" style="left:75px;top:307px;" width="14" height="14" viewBox="0 0 14 14"><path d="M0.6 12.5V4H4.6V1.6H8.6V5H12.4V12.5Z" fill="#3b3c44" stroke="#ced1dc" stroke-width="1.1" stroke-linejoin="round"/><path d="M4.6 4V12.5M8.6 5V12.5" stroke="#ced1dc" stroke-width="1.1"/></svg>
<div class="ui" style="left:92.0px;top:306.7px;font-size:13px;color:#cad3f5;font-weight:normal;letter-spacing:0.34px;">External Libraries</div>
<svg class="ic" style="left:74px;top:328px;" width="17" height="17" viewBox="0 0 17 17"><path d="M1 5.5H7M1 8.5H8.2M1 11.5H13M1 14.4H9" stroke="#ced1dc" stroke-width="1.1"/><circle cx="11.6" cy="5.5" r="3.6" fill="#6d9cf5"/><path d="M11.3 3.3V5.9L12.7 7" stroke="#1e2030" stroke-width="0.9" fill="none"/></svg>
<div class="ui" style="left:92.0px;top:330.7px;font-size:13px;color:#cad3f5;font-weight:normal;letter-spacing:0.38px;">Scratches and Consoles</div>
<svg class="ic" style="left:287px;top:54px" width="14" height="14" viewBox="0 0 14 14"><use href="#py"/></svg>
<div class="ui" style="left:307.4px;top:53.7px;font-size:13px;color:#cad3f5;font-weight:normal;letter-spacing:0.31px;">jeu.py</div>
<svg class="ic" style="left:388px;top:54px" width="14" height="14" viewBox="0 0 14 14"><use href="#py"/></svg>
<div class="ui" style="left:408.2px;top:53.7px;font-size:13px;color:#cad3f5;font-weight:normal;letter-spacing:0.6px;">color.py</div>
<div class="abs" style="left:488px;top:41px;width:123px;height:40px;background:#393c53"></div>
<div class="abs" style="left:488px;top:80px;width:123px;height:2px;background:#c6a0f6"></div>
<svg class="ic" style="left:501px;top:54px" width="14" height="14" viewBox="0 0 14 14"><use href="#py"/></svg>
<div class="ui" style="left:522.0px;top:53.7px;font-size:13px;color:#c6a0f6;font-weight:normal;letter-spacing:0.56px;">joueur.py</div>
<svg class="ic" style="left:590.5px;top:57px;" width="9" height="9" viewBox="0 0 9 9"><path d="M0.7 0.7L8.3 8.3M8.3 0.7L0.7 8.3" stroke="#7f8498" stroke-width="1.1"/></svg>
<svg class="ic" style="left:623px;top:54px" width="14" height="14" viewBox="0 0 14 14"><use href="#py"/></svg>
<div class="ui" style="left:643.2px;top:53.7px;font-size:13px;color:#cad3f5;font-weight:normal;letter-spacing:0.39px;">partie.py</div>
<div class="abs" style="left:1858.7px;top:54.900000000000006px;width:2.6px;height:2.6px;border-radius:50%;background:#ced1dc"></div>
<div class="abs" style="left:1858.7px;top:59.7px;width:2.6px;height:2.6px;border-radius:50%;background:#ced1dc"></div>
<div class="abs" style="left:1858.7px;top:64.7px;width:2.6px;height:2.6px;border-radius:50%;background:#ced1dc"></div>
<div class="abs" style="left:1298px;top:82px;width:1px;height:964px;background:#363a4f"></div>
<svg class="ic" style="left:1799px;top:90px;" width="15" height="14" viewBox="0 0 15 14"><path d="M1.2 5.8L4.6 9.2L12.4 1.4" fill="none" stroke="#5fa667" stroke-width="1.6"/><path d="M1 12.6L2.6 11.2L4.2 12.6L5.8 11.2L7.4 12.6L9 11.2L10.6 12.6" fill="none" stroke="#5fa667" stroke-width="0.9"/></svg>
<div class="ui" style="left:1815.9px;top:88.7px;font-size:13px;color:#b8c0e0;font-weight:normal;letter-spacing:0.4px;">65</div>
<svg class="ic" style="left:1842.5px;top:92px;" width="10" height="6" viewBox="0 0 10 6"><path d="M0.8 5L5 1L9.2 5" fill="none" stroke="#ced1dc" stroke-width="1.1"/></svg>
<svg class="ic" style="left:1865.2px;top:93px;" width="10" height="6" viewBox="0 0 10 6"><path d="M0.8 1L5 5L9.2 1" fill="none" stroke="#ced1dc" stroke-width="1.1"/></svg>
<div class="abs" style="left:1870px;top:111px;width:8px;height:404px;background:#4b4c5a"></div>
<svg class="ic" style="left:1891px;top:51px;" width="18" height="20" viewBox="0 0 18 20"><path d="M14.3 6.6V10.5L16.7 14.9H1.7L3.9 10.5V6.6A5.2 5.2 0 0 1 9.1 1.4A5.2 5.2 0 0 1 14.3 6.6Z" fill="none" stroke="#ced1dc" stroke-width="1.3" stroke-linejoin="round"/><path d="M7.4 17.2H10.8L9.1 18.9Z" fill="#ced1dc" stroke="#ced1dc" stroke-width="0.6" stroke-linejoin="round"/></svg>
<div class="abs" style="left:1903px;top:51px;width:7px;height:7px;border-radius:50%;background:#548af7;box-shadow:0 0 0 1.6px #1e2030"></div>
<svg class="ic" style="left:1887.5px;top:89px;" width="26" height="24" viewBox="0 0 26 24"><path d="M6.2 5.3C9 4.3 15 4.3 18.5 7C21.5 9.5 20.5 14 17 15.3C14.5 16.2 11 16 9.8 13.8C8.9 12 10.5 10.6 12 10.8C13.2 11 13.7 12.2 13.2 12.8M19.8 18.4C17 19.6 11 19.8 7.2 17.3C4.2 15.3 4.3 10.6 7.6 9C10 7.8 14.3 7.9 15.6 10.4C16.4 12 15.4 13.8 13.2 13.8" fill="none" stroke="#ced1dc" stroke-width="1.35" stroke-linecap="round"/></svg>
<svg class="ic" style="left:1891px;top:131px;" width="18" height="20" viewBox="0 0 18 20"><ellipse cx="9" cy="4" rx="7.4" ry="2.8" fill="none" stroke="#ced1dc" stroke-width="1.3"/><path d="M1.6 4V15.4C1.6 17 4.9 18.3 9 18.3S16.4 17 16.4 15.4V4M1.6 8C1.6 9.6 4.9 10.9 9 10.9S16.4 9.6 16.4 8M1.6 11.8C1.6 13.4 4.9 14.7 9 14.7S16.4 13.4 16.4 11.8" fill="none" stroke="#ced1dc" stroke-width="1.3"/></svg>
<div class="abs" style="left:14px;top:1059px;width:8.5px;height:8.5px;border:1.2px solid #6d9cf2;border-radius:1.5px;background:#2a3350"></div>
<div class="ui" style="left:25.9px;top:1054.9px;font-size:13px;color:#cad3f5;font-weight:normal;letter-spacing:0.6px;">MonopN’SI</div>
<svg class="ic" style="left:102.5px;top:1058.5px;" width="6" height="10" viewBox="0 0 6 10"><path d="M1 0.8L5 5.0L1 9.2" fill="none" stroke="#a5adcb" stroke-width="1.1"/></svg>
<svg class="ic" style="left:119px;top:1055px" width="14" height="14" viewBox="0 0 14 14"><use href="#py"/></svg>
<div class="ui" style="left:139.0px;top:1054.9px;font-size:13px;color:#cad3f5;font-weight:normal;letter-spacing:0.56px;">joueur.py</div>
<div class="ui" style="left:1568.2px;top:1055.5px;font-size:13px;color:#cad3f5;font-weight:normal;letter-spacing:0.5px;">46:47</div>
<div class="ui" style="left:1618.3px;top:1055.5px;font-size:13px;color:#cad3f5;font-weight:normal;letter-spacing:-0.9px;">CRLF</div>
<div class="ui" style="left:1666.5px;top:1055.5px;font-size:13px;color:#cad3f5;font-weight:normal;letter-spacing:0.8px;">UTF-8</div>
<div class="ui" style="left:1727.0px;top:1055.5px;font-size:13px;color:#cad3f5;font-weight:normal;letter-spacing:0.28px;">4 spaces</div>
<div class="ui" style="left:1798.0px;top:1055.5px;font-size:13px;color:#cad3f5;font-weight:normal;letter-spacing:0.28px;">Python 3.12</div>
<svg class="ic" style="left:1888px;top:1056px;" width="16" height="14" viewBox="0 0 16 14"><rect x="1" y="5.6" width="9.6" height="7.4" rx="1.4" fill="none" stroke="#ced1dc" stroke-width="1.2"/><path d="M8.2 5.6V3.6A2.6 2.6 0 0 1 13.4 3.6V5" fill="none" stroke="#ced1dc" stroke-width="1.2"/><rect x="4.9" y="8.4" width="1.8" height="1.8" fill="#ced1dc"/></svg>
</body></html>
